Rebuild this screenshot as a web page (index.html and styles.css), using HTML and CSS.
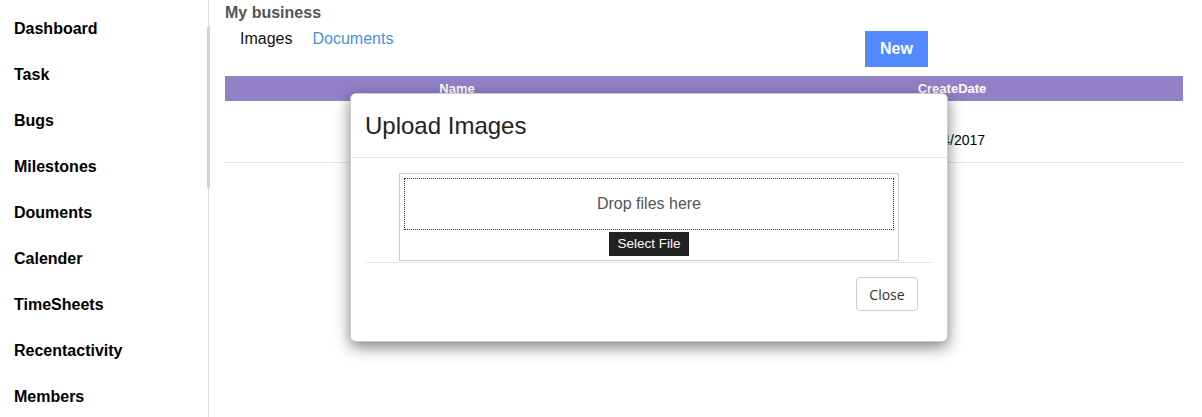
FILE: index.html
```html
<!DOCTYPE html>
<html lang="en">
<head>
    <meta charset="UTF-8">
    <meta name="viewport" content="width=device-width, initial-scale=1.0">
    <title>My business</title>
    <link rel="stylesheet" href="styles.css">
</head>
<body>
    <div class="layout">
        <aside class="sidebar">
            <ul class="nav">
                <li>Dashboard</li>
                <li>Task</li>
                <li>Bugs</li>
                <li>Milestones</li>
                <li>Douments</li>
                <li>Calender</li>
                <li>TimeSheets</li>
                <li>Recentactivity</li>
                <li>Members</li>
            </ul>
        </aside>
        <main class="content">
            <h2 class="page-title">My business</h2>
            <div class="toolbar">
                <ul class="tabs">
                    <li class="tab active">Images</li>
                    <li class="tab">Documents</li>
                </ul>
                <button class="button-new">New</button>
            </div>
            <div class="grid">
                <div class="grid-head">
                    <div class="col-name">Name</div>
                    <div class="col-date">CreateDate</div>
                </div>
                <div class="grid-row">
                    <div class="col-name"></div>
                    <div class="col-date">12/04/2017</div>
                </div>
            </div>
        </main>
    </div>

    <div class="modal">
        <div class="modal-header">
            <h4 class="modal-title">Upload Images</h4>
        </div>
        <div class="modal-body">
            <div class="dropzone">
                <div class="drop-area">Drop files here</div>
                <button class="button-select">Select File</button>
            </div>
        </div>
        <div class="modal-footer">
            <button class="button-close">Close</button>
        </div>
    </div>
</body>
</html>
```

FILE: styles.css
```css
* {
    margin: 0;
    padding: 0;
    box-sizing: border-box;
}

body {
    font-family: 'Liberation Sans', Arial, sans-serif;
    background-color: #fff;
    color: #000;
    width: 1202px;
    height: 417px;
    overflow: hidden;
}

.layout {
    display: flex;
    height: 417px;
}

.sidebar {
    position: relative;
    width: 209px;
    flex-shrink: 0;
    border-right: 1px solid #dcdcdc;
}

.sidebar::after {
    content: '';
    position: absolute;
    right: -2px;
    top: 27px;
    width: 3px;
    height: 161px;
    background-color: #d4d4d4;
}

.nav {
    list-style: none;
    padding-top: 6px;
}

.nav li {
    height: 46px;
    line-height: 46px;
    padding-left: 14px;
    font-size: 16px;
    font-weight: bold;
}

.content {
    flex: 1;
    padding: 0 19px 0 16px;
}

.page-title {
    padding-top: 3px;
    font-size: 16px;
    line-height: 20px;
    color: #555;
}

.toolbar {
    display: flex;
    align-items: flex-start;
    margin-top: 6px;
}

.tabs {
    list-style: none;
    display: flex;
    gap: 20px;
    padding-left: 15px;
}

.tab {
    font-size: 16px;
    line-height: 20px;
    color: #4a90d9;
}

.tab.active {
    color: #111;
}

.button-new {
    margin-top: 2px;
    margin-left: auto;
    margin-right: 255px;
    width: 63px;
    height: 36px;
    border: none;
    background-color: #5289ff;
    color: #fff;
    font-family: 'Liberation Sans', Arial, sans-serif;
    font-size: 16px;
    font-weight: bold;
}

.grid {
    margin-top: 9px;
}

.grid-head,
.grid-row {
    display: grid;
    grid-template-columns: 464px 1fr;
}

.grid-head {
    height: 25px;
    line-height: 26px;
    background-color: #9281c6;
    color: #fff;
    font-size: 13px;
    font-weight: bold;
    text-align: center;
}

.grid-head .col-date {
    padding-left: 32px;
}

.grid-row .col-date {
    padding-left: 28px;
}

.grid-row {
    height: 62px;
    line-height: 14px;
    padding-top: 32px;
    border-bottom: 1px solid #e5e5e5;
    font-size: 14px;
    text-align: center;
}

.modal {
    position: absolute;
    left: 350px;
    top: 93px;
    width: 598px;
    height: 249px;
    background-color: #fff;
    border: 1px solid rgba(0, 0, 0, 0.2);
    border-radius: 6px;
    box-shadow: 0 5px 15px rgba(0, 0, 0, 0.5);
}

.modal-header {
    height: 64px;
    padding: 15px 14px;
    border-bottom: 1px solid #e5e5e5;
}

.modal-title {
    font-size: 24px;
    font-weight: normal;
    line-height: 33px;
    color: #222;
}

.modal-body {
    padding: 15px 15px 0;
}

.dropzone {
    width: 500px;
    margin: 0 auto;
    padding: 4px;
    border: 1px solid #ccc;
    text-align: center;
}

.drop-area {
    height: 52px;
    line-height: 50px;
    border: 1px dotted #333;
    font-size: 16px;
    color: #555;
}

.button-select {
    display: block;
    margin: 2px auto 0;
    width: 80px;
    height: 24px;
    padding-bottom: 2px;
    border: none;
    background-color: #222;
    color: #fff;
    font-family: 'Liberation Sans', Arial, sans-serif;
    font-size: 13.5px;
}

.modal-footer {
    display: flex;
    justify-content: flex-end;
    margin: 1px 14px 0;
    padding: 14px 15px 0;
    border-top: 1px solid #e5e5e5;
}

.button-close {
    width: 62px;
    height: 34px;
    border: 1px solid #ccc;
    border-radius: 4px;
    background-color: #fff;
    color: #333;
    font-family: 'Open Sans', sans-serif;
    font-size: 14px;
}
```
